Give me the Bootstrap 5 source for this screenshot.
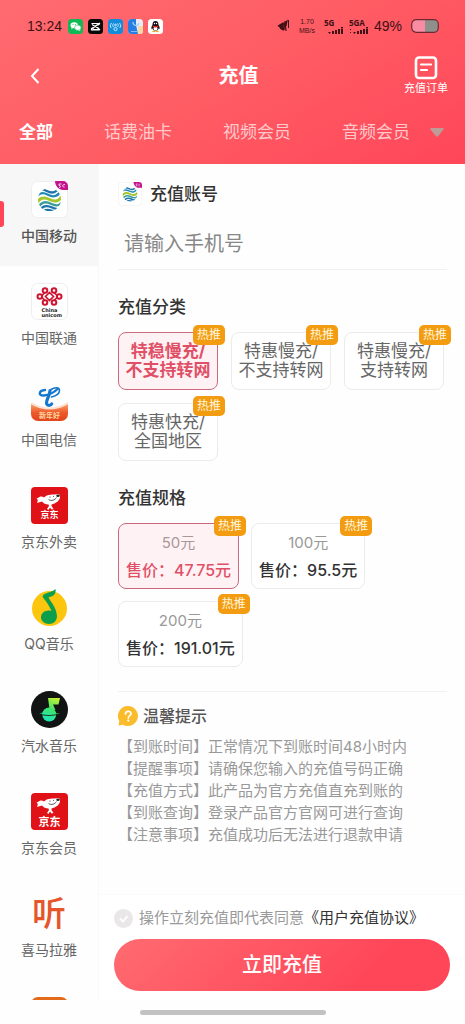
<!DOCTYPE html>
<html lang="zh-CN">
<head>
<meta charset="utf-8">
<meta name="viewport" content="width=device-width, initial-scale=1">
<title>充值</title>
<link rel="stylesheet" href="https://cdn.jsdelivr.net/npm/bootstrap@5.3.0/dist/css/bootstrap.min.css">
<style>
  :root { --brand: #ff4659; --brand-light: #ff6b70; --hot: #f39c12; --line: #f1f1f1; }
  body { font-family: Inter, "Noto Sans CJK SC", sans-serif; color: #333; background: #fefefe; line-height: 20px; }
  a { color: inherit; text-decoration: none; }
  svg { display: block; flex: none; }

  .top-area { background: linear-gradient(150deg, var(--brand-light) 0%, #ff5c64 50%, var(--brand) 100%); color: #fff; }
  .status-row { height: 52px; padding: 0 26px 0 27px; color: #401116; }
  .hand { font-family: "Liberation Sans", sans-serif; font-size: 14px; }
  .tiny { font-family: "Liberation Sans", sans-serif; font-size: 7px; line-height: 9px; }
  .net { font-family: "Open Sans", sans-serif; font-weight: 700; font-size: 8px; line-height: 9px; }
  .title-row { height: 48px; padding: 0 17px 0 19px; }
  .back-btn { width: 54px; padding: 0 0 0 11px; border: 0; background: none; color: #fff; text-align: left; }
  .page-title { font-size: 20px; line-height: 24px; font-weight: 700; }
  .order-link { font-size: 11px; line-height: 16px; width: 44px; white-space: nowrap; }
  .tab-row { height: 64px; padding: 0 20px 0 19px; gap: 51px; font-size: 17px; white-space: nowrap; color: #ffc9cb; }
  .tab-row .current { color: #fff; font-weight: 700; }
  .tab-group { gap: 51px; }
  .more-btn { margin-left: auto; }

  .side { width: 99px; border-right: 1px solid #f8f8f8; font-size: 14px; color: #666; }
  .side-item { height: 102px; flex: none; padding-top: 17px; gap: 8px; position: relative; }
  .side-item.current { background: #f7f7f7; color: #555; font-weight: 500; }
  .side-item.current::before { content: ""; position: absolute; left: 0; top: 37px; width: 4px; height: 26px; border-radius: 0 3px 3px 0; background: var(--brand); }
  .ting { font-size: 34px; line-height: 37px; height: 37px; font-weight: 500; color: #e5562a; }

  .content { padding: 15px 18px 0 19px; }
  .sec-title { font-size: 17px; line-height: 24px; font-weight: 500; margin: 0; }
  .acct-row { height: 30px; gap: 8px; }
  .phone { height: 51px; margin-top: 10px; padding: 0 6px; border: 0; border-bottom: 1px solid var(--line); border-radius: 0; font-size: 20px; background: none; width: 100%; outline: 0; }
  .phone::placeholder { color: #888; opacity: 1; }
  .group { margin: 25px 0 0; }
  .group .sec-title { margin-bottom: 13px; }
  .opt { position: relative; border: 1px solid #ebebeb; border-radius: 8px; background: #fff; padding: 0; color: #666; }
  .opt.picked { border-color: #c96b7f; background: #fff2f4; color: #df5067; }
  .kind { width: 100px; height: 58px; font-size: 17px; line-height: 19px; white-space: nowrap; }
  .kind.picked { font-weight: 700; }
  .kinds { gap: 13px; }
  .specs { gap: 12px; }
  .spec { height: 66px; padding: 0 7px; white-space: nowrap; }
  .face { font-size: 15px; line-height: 20px; color: #999; margin-bottom: 7px; }
  .price { font-size: 16px; line-height: 20px; font-weight: 500; color: #333; }
  .picked .face { color: #aa979b; }
  .picked .price { color: #df5067; }
  .hot { position: absolute; top: -8px; right: -8px; width: 32px; height: 20px; border-radius: 5px; background: var(--hot); color: #fff6dc; font-size: 12px; line-height: 19px; font-weight: 400; }

  .tips { margin-top: 24px; border-top: 1px solid var(--line); padding-top: 14px; }
  .tips h2 { font-size: 16px; line-height: 20px; font-weight: 500; color: #555; margin: 0; }
  .tips p { margin: 0; font-size: 15px; line-height: 22px; color: #999; white-space: nowrap; }
  .tips-list { margin-top: 10px; }

  .pay-area { padding: 12px 15px 9px; background: #fff; border-top: 1px solid #fafafa; }
  .agree { font-size: 15px; line-height: 22px; gap: 6px; color: #999; white-space: nowrap; }
  .agree a { color: #333; }
  .agree-box { appearance: none; width: 19px; height: 19px; border-radius: 50%; margin: 0; flex: none; background: #e9e7e8 url("data:image/svg+xml,%3Csvg xmlns='http://www.w3.org/2000/svg' viewBox='0 0 19 19'%3E%3Cpath d='M6 9.5l3 3 4.500-5.500' fill='none' stroke='%23fff' stroke-width='1.800'/%3E%3C/svg%3E") center / contain no-repeat; }
  .pay-btn { margin-top: 10px; height: 52px; border: 0; border-radius: 26px; background: linear-gradient(135deg, var(--brand-light), var(--brand) 75%); color: #fff; font-size: 20px; font-weight: 500; }
  .home-area { height: 24px; }
  .home-pill { width: 186px; height: 5px; border-radius: 3px; background: #c2c2c2; }
</style>
<script src="https://cdn.jsdelivr.net/npm/bootstrap@5.3.0/dist/js/bootstrap.bundle.min.js"></script>
</head>
<body>
<svg width="0" height="0" class="position-absolute" aria-hidden="true">
  <defs>
    <linearGradient id="gSoda" gradientUnits="userSpaceOnUse" x1="14" y1="30" x2="26" y2="7"><stop offset="0" stop-color="#19e3c0"/><stop offset=".5" stop-color="#3de56d"/><stop offset="1" stop-color="#c8f02c"/></linearGradient>
    <linearGradient id="gFire" x1="0" y1="0" x2="0" y2="1"><stop offset="0" stop-color="#f9a06a"/><stop offset=".5" stop-color="#ee5a2c"/><stop offset="1" stop-color="#e0441c"/></linearGradient>
    <clipPath id="round"><circle cx="18.500" cy="18.500" r="11.500"/></clipPath>
    <symbol id="mobile" viewBox="0 0 37 37">
      <rect x=".5" y=".5" width="36" height="36" rx="6" fill="#fff" stroke="#eee"/>
      <g clip-path="url(#round)"><g fill="none" stroke-width="2.300" transform="rotate(-18 18.500 18.500)">
        <path d="M5 9.500q6.500-7 13.500 0t13.500 0" stroke="#1b74ac"/>
        <path d="M5 13.500q6.500-7 13.500 0t13.500 0" stroke="#2389b5"/>
        <path d="M5 18.500q6.500-7 13.500 0t13.500 0" stroke="#a3c62d" stroke-width="3"/>
        <path d="M5 23q6.500-7 13.500 0t13.500 0" stroke="#3a9c9a"/>
        <path d="M5 27q6.500-7 13.500 0t13.500 0" stroke="#1b74ac"/>
        <path d="M5 31q6.500-7 13.500 0t13.500 0" stroke="#1b74ac"/>
      </g></g>
      <path d="M24 0h8a5 5 0 0 1 5 5v4h-5c-4 0-8-4-8-9z" fill="#c4158c"/>
      <path d="M30.500 3H28v1.500c2 0 2 2 0 2M34 3.500c-3-.5-3 3-.5 2.500" stroke="#fff" stroke-width=".8" fill="none"/>
    </symbol>
    <symbol id="joy" viewBox="0 0 37 20">
      <path d="M7 7c2-2 4-2 6-.5C16 3 22 4 28 3c2.500 3 .5 7-4.500 9.500l-3 1V15l2 3-2 .5-1.500-2-1.500 2.500-1.500-1 2-3-.5-1.500c-3 0-5-1-6.500-3l-5 1.500c1-2 1-4-.5-5z" fill="#fff"/>
      <path d="M17.500 8.500c3 2 6.500.5 8-2" fill="none" stroke="#333" stroke-width=".8"/>
      <ellipse cx="27" cy="4.800" rx="1.700" ry="1.200" fill="#222"/><circle cx="19" cy="6" r=".6" fill="#222"/><circle cx="22.500" cy="5.300" r=".5" fill="#222"/>
    </symbol>
  </defs>
</svg>

<div class="d-flex flex-column vh-100 overflow-hidden">
  <header class="top-area flex-shrink-0">
    <div class="status-row d-flex align-items-center">
      <span class="hand">13:24</span>
      <span class="d-flex" style="gap:5px;margin-left:6px">
        <svg width="15" height="15" viewBox="0 0 15 15"><rect width="15" height="15" rx="3.500" fill="#10b954"/><ellipse cx="6.200" cy="6.200" rx="3.700" ry="3" fill="#fff"/><ellipse cx="9.800" cy="8.700" rx="3.200" ry="2.600" fill="#fff" stroke="#10b954" stroke-width=".5"/><path d="M4 8l-1 2 2.500-1M11.500 10.500l1 1.500-2.500-1" fill="#fff"/><circle cx="5" cy="5.500" r=".5" fill="#10b954"/><circle cx="7.500" cy="5.500" r=".5" fill="#10b954"/></svg>
        <svg width="15" height="15" viewBox="0 0 15 15"><rect width="15" height="15" rx="3.500" fill="#080808"/><path d="M3.500 4.500h6.500v1L5 9v1.500h5.500M12 4L3.500 9.500v1.500h7V9.500L4 5.500M10 6l2-1.500M9.500 8.500L12 11" fill="none" stroke="#fff" stroke-width="1.200"/></svg>
        <svg width="15" height="15" viewBox="0 0 15 15"><rect width="15" height="15" rx="3.500" fill="#138ddb"/><g fill="none" stroke="#d8f2ff" stroke-width=".9"><path d="M3.500 4c-1.500 2-1.500 4 0 5M5.500 4.500c-1 1.500-1 2.500 0 3.500M11.500 4c1.500 2 1.500 4 0 5M9.500 4.500c1 1.500 1 2.500 0 3.500"/><circle cx="7.500" cy="6" r=".9"/><circle cx="7.500" cy="10" r="1.600"/></g></svg>
        <svg width="15" height="15" viewBox="0 0 15 15"><rect width="15" height="15" rx="3.500" fill="#e8edf4"/><path d="M3.500 0H8v6l2 9H3.500A3.500 3.500 0 0 1 0 11.500v-8A3.500 3.500 0 0 1 3.500 0z" fill="#2a7de0"/><path d="M10 7h5v4.500a3.500 3.500 0 0 1-3.500 3.500H10z" fill="#f4d9a2"/><path d="M5 3c0 4 5 5 6 1" fill="none" stroke="#9fd0ff" stroke-width="1.200"/><path d="M3 12.500h6" stroke="#7db9f8"/></svg>
        <svg width="15" height="15" viewBox="0 0 15 15"><rect width="15" height="15" rx="3.500" fill="#fff"/><path d="M7.500 2c2.500 0 3 2 3 4 1 1.500 1.500 3 1 4l-1-.5c-.5 3-5.500 3-6 0l-1 .5c-.5-1 0-2.500 1-4 0-2 .5-4 3-4z" fill="#141414"/><ellipse cx="7.500" cy="9.500" rx="2" ry="2" fill="#fff"/><path d="M4.700 7.200c2 1 3.600 1 5.600 0" stroke="#e3202c" stroke-width="1.300" fill="none"/><ellipse cx="5.800" cy="12.500" rx="1.600" ry=".8" fill="#f5a31a"/><ellipse cx="9.200" cy="12.500" rx="1.600" ry=".8" fill="#f5a31a"/><circle cx="6.500" cy="4.500" r=".7" fill="#fff"/><circle cx="8.500" cy="4.500" r=".7" fill="#fff"/></svg>
      </span>
      <span class="d-flex align-items-center ms-auto" style="gap:5px">
        <svg width="13" height="14" viewBox="0 0 13 14"><path d="M1 7l5-3v7L3 9M5 6l5-4-1 5M7 11l1-8M8 2l1 10" fill="#401116" stroke="#401116" stroke-width="1.200"/><path d="M11.500 1v8" stroke="#401116"/></svg>
        <span class="tiny text-center mx-1">1.70<br>MB/s</span>
        <span class="net">5G<svg width="20" height="8" viewBox="0 0 20 8" fill="#401116"><path d="M4 5h3L5.500 7zM8 4h2v3H8zM11 3h2v4h-2zM14 2h2v5h-2zM17 0h2v1.500h-2zM17 2h2v5h-2z"/></svg></span>
        <span class="net">5GA<svg width="20" height="8" viewBox="0 0 20 8" fill="#401116"><path d="M1 2h1v1H1zM1 5h1v1H1zM4 5h3L5.500 7zM8 4h2v3H8zM11 3h2v4h-2zM14 2h2v5h-2zM17 0h2v1.500h-2zM17 2h2v5h-2z"/></svg></span>
        <span class="hand">49%</span>
        <svg class="ms-1" width="28" height="14" viewBox="0 0 28 14"><rect x=".7" y=".7" width="26.600" height="12.600" rx="4.500" fill="#8f908c"/><path d="M5 .7h9v12.600H5A4.300 4.300 0 0 1 .7 9V5A4.300 4.300 0 0 1 5 .7z" fill="#f98ba3"/><rect x=".7" y=".7" width="26.600" height="12.600" rx="4.500" fill="none" stroke="#6d2a35" stroke-width="1.200"/></svg>
      </span>
    </div>
    <div class="title-row d-flex align-items-center">
      <button type="button" class="back-btn" aria-label="返回"><svg width="10" height="16" viewBox="0 0 10 16"><path d="M8.500 1L2 8l6.500 7" fill="none" stroke="#fff" stroke-width="2"/></svg></button>
      <h1 class="page-title flex-grow-1 text-center m-0">充值</h1>
      <a href="#" class="order-link d-flex flex-column align-items-center">
        <svg width="24" height="24" viewBox="0 0 24 24" fill="none" stroke="#fff"><rect x="2" y="1.500" width="20" height="20.500" rx="3" stroke-width="2.600"/><path d="M7 8.500h10M7 14h6" stroke-width="2.200" stroke-linecap="round"/></svg>
        <span>充值订单</span>
      </a>
    </div>
    <div class="tab-row d-flex align-items-center">
      <nav class="tab-group d-flex"><a href="#" class="current">全部</a><a href="#">话费油卡</a><a href="#">视频会员</a><a href="#">音频会员</a></nav>
      <button type="button" class="border-0 bg-transparent p-0 more-btn" style="margin-left:-31px" aria-label="更多"><svg width="14" height="9" viewBox="0 0 14 9"><path d="M1.500 0h11c1.300 0 1.500 1 1 1.500L8.200 8c-.7.900-1.700.9-2.400 0L.5 1.500C0 1 .2 0 1.500 0z" fill="#bd9c98"/></svg></button>
    </div>
  </header>

  <div class="d-flex flex-grow-1" style="min-height:0">
    <nav class="side d-flex flex-column flex-shrink-0 overflow-hidden">
      <a href="#" class="side-item current d-flex flex-column align-items-center"><svg width="37" height="37"><use href="#mobile"/></svg>中国移动</a>
      <a href="#" class="side-item d-flex flex-column align-items-center">
        <svg width="37" height="37" viewBox="0 0 37 37"><rect x=".5" y=".5" width="36" height="36" rx="6" fill="#fff" stroke="#eee"/>
          <g fill="none" stroke="#cf1431" stroke-width="2"><circle cx="14" cy="7.500" r="2.300"/><circle cx="23" cy="7.500" r="2.300"/><circle cx="8.800" cy="13.500" r="2.300"/><circle cx="28.200" cy="13.500" r="2.300"/><circle cx="14" cy="19.500" r="2.300"/><circle cx="23" cy="19.500" r="2.300"/><path d="M18.500 9.500l4 4-4 4-4-4zM11 12.500l3-3M11 14.500l3 3M26 12.500l-3-3M26 14.500l-3 3" stroke-width="1.700"/></g>
          <text x="10.500" y="29" font-family="DejaVu Sans" font-size="5" font-weight="700" fill="#222">China</text><text x="10.500" y="33.500" font-family="DejaVu Sans" font-size="5" font-weight="700" fill="#222">unicom</text></svg>中国联通</a>
      <a href="#" class="side-item d-flex flex-column align-items-center">
        <svg width="37" height="37" viewBox="0 0 37 37"><path d="M0 19c12 6 25 6 37 0v10a7 7 0 0 1-7 7H7a7 7 0 0 1-7-7z" fill="url(#gFire)"/><path d="M0 18c12 7 25 7 37 0" fill="none" stroke="#fde0cf" stroke-width="2"/>
          <g fill="none" stroke="#1677cf" stroke-linecap="round"><path d="M14 5C7.500 5.500 7 11 13 10.500c5-.5 10-3 13.500-6.500" stroke-width="2.400"/><path d="M20 4.500c4-2.500 8.500-2.500 8.500 1 0 3-4 5.500-8 6.500" stroke-width="1.600"/><path d="M19 5.500c0 5-4.500 10-3.300 13.500.7 2 4 1.700 5 0" stroke-width="3.200"/></g>
          <text x="18.500" y="33" text-anchor="middle" font-family="Noto Sans CJK SC" font-size="7" font-weight="700" fill="#ffd9a0">新年好</text></svg>中国电信</a>
      <a href="#" class="side-item d-flex flex-column align-items-center">
        <svg width="37" height="37" viewBox="0 0 37 37"><rect width="37" height="37" rx="4" fill="#e01218"/><use href="#joy" y="4" width="37" height="20"/><text x="18.500" y="31" text-anchor="middle" font-family="Noto Sans CJK SC" font-size="9" font-weight="700" fill="#fff">京东</text></svg>京东外卖</a>
      <a href="#" class="side-item d-flex flex-column align-items-center">
        <svg width="37" height="37" viewBox="0 0 37 37"><circle cx="18.500" cy="19.500" r="17.500" fill="#fbc60d"/><path d="M24.500 0c.5 4-1 6-3 7l-4 1.500c2 4 8 10 8.500 18.500 0 5-3.500 8-8 8s-8-3-8-6.500c0-5 5-8 10.500-6.500C18.500 17 15.500 13 12 8.500c-1-2 1-3.500 4-4.500s6-1.500 8.500-4z" fill="#0c9f4b"/></svg>QQ音乐</a>
      <a href="#" class="side-item d-flex flex-column align-items-center">
        <svg width="37" height="37" viewBox="0 0 37 37"><circle cx="18.500" cy="18.500" r="18.500" fill="#121413"/><g fill="url(#gSoda)"><path d="M17 7h12l-1.500 6.500h-5.500l2.500 5.500-6-1z"/><circle cx="18.200" cy="23.500" r="7"/><path d="M8 22.300l10-1.500v3zM29 22.700l-10-.9v2.800z"/></g><path d="M10 23.800l8 .8 9-1" fill="none" stroke="#121413" stroke-width=".8"/></svg>汽水音乐</a>
      <a href="#" class="side-item d-flex flex-column align-items-center">
        <svg width="37" height="37" viewBox="0 0 37 37"><rect width="37" height="37" rx="4" fill="#e01218"/><use href="#joy" y="2" width="37" height="20"/><text x="18.500" y="33" text-anchor="middle" font-family="Noto Sans CJK SC" font-size="11" font-weight="700" fill="#fff">京东</text></svg>京东会员</a>
      <a href="#" class="side-item d-flex flex-column align-items-center"><span class="ting">听</span>喜马拉雅</a>
      <a href="#" class="side-item d-flex flex-column align-items-center" aria-label="更多商户"><svg width="37" height="37" viewBox="0 0 37 37"><rect width="37" height="37" rx="7" fill="#e3691b"/></svg></a>
    </nav>

    <div class="d-flex flex-column flex-grow-1" style="min-width:0">
      <main class="content flex-grow-1 overflow-hidden">
        <div class="acct-row d-flex align-items-center"><svg width="24" height="24"><use href="#mobile"/></svg><label for="phone" class="sec-title">充值账号</label></div>
        <input id="phone" type="tel" class="phone" placeholder="请输入手机号">

        <section class="group">
          <h2 class="sec-title">充值分类</h2>
          <div class="kinds d-flex flex-wrap">
            <button type="button" class="opt kind picked">特稳慢充/<br>不支持转网<span class="hot">热推</span></button>
            <button type="button" class="opt kind">特惠慢充/<br>不支持转网<span class="hot">热推</span></button>
            <button type="button" class="opt kind">特惠慢充/<br>支持转网<span class="hot">热推</span></button>
            <button type="button" class="opt kind">特惠快充/<br>全国地区<span class="hot">热推</span></button>
          </div>
        </section>

        <section class="group">
          <h2 class="sec-title">充值规格</h2>
          <div class="specs d-flex flex-wrap">
            <button type="button" class="opt spec picked"><span class="face d-block">50元</span><span class="price d-block">售价：47.75元</span><span class="hot">热推</span></button>
            <button type="button" class="opt spec"><span class="face d-block">100元</span><span class="price d-block">售价：95.5元</span><span class="hot">热推</span></button>
            <button type="button" class="opt spec"><span class="face d-block">200元</span><span class="price d-block">售价：191.01元</span><span class="hot">热推</span></button>
          </div>
        </section>

        <section class="tips">
          <div class="d-flex align-items-center" style="gap:5px">
            <svg width="20" height="20" viewBox="0 0 20 20"><path d="M10 0a10 10 0 1 1-5 18.700L.5 19.500l.8-4.500A10 10 0 0 1 10 0z" fill="#fbbc2b"/><path d="M7.500 8c0-3.500 5.500-3.500 5.500-.3 0 2-2.700 2-2.700 4.300" fill="none" stroke="#fff" stroke-width="1.700" stroke-linecap="round"/><circle cx="10.300" cy="14.600" r="1.100" fill="#fff"/></svg>
            <h2>温馨提示</h2>
          </div>
          <div class="tips-list">
            <p>【到账时间】正常情况下到账时间48小时内</p>
            <p>【提醒事项】请确保您输入的充值号码正确</p>
            <p>【充值方式】此产品为官方充值直充到账的</p>
            <p>【到账查询】登录产品官方官网可进行查询</p>
            <p>【注意事项】充值成功后无法进行退款申请</p>
          </div>
        </section>
      </main>
      <footer class="pay-area flex-shrink-0">
        <div class="agree d-flex align-items-center"><input type="checkbox" id="agree" class="agree-box"><span><label for="agree">操作立刻充值即代表同意</label><a href="#">《用户充值协议》</a></span></div>
        <button type="button" class="pay-btn w-100">立即充值</button>
      </footer>
    </div>
  </div>
  <div class="home-area d-flex align-items-center justify-content-center flex-shrink-0"><div class="home-pill"></div></div>
</div>
</body>
</html>
